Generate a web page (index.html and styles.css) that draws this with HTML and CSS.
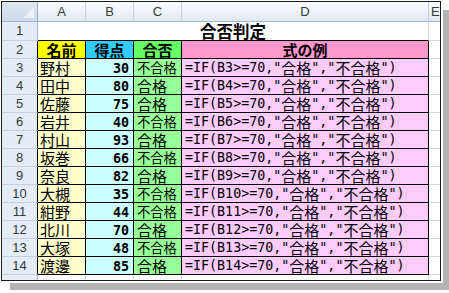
FILE: index.html
```html
<!DOCTYPE html>
<html lang="ja">
<head>
<meta charset="utf-8">
<link rel="stylesheet" href="styles.css">
</head>
<body>
<div class="win">
  <div class="sheet">
    <div class="corner"><span class="tri"></span></div>
    <div class="ch">A</div><div class="ch">B</div><div class="ch">C</div><div class="ch">D</div><div class="ch che">E</div>

    <div class="rh">1</div>
    <div class="title">合否判定</div>
    <div class="g"></div>

    <div class="rh rhb">2</div>
    <div class="c hd ya">名前</div>
    <div class="c hd cb">得点</div>
    <div class="c hd gc">合否</div>
    <div class="c hd pd">式の例</div>
    <div class="g"></div>

    <div class="rh rhb">3</div><div class="c na">野村</div><div class="c sc">30</div><div class="c rs ng">不合格</div><div class="c fm"><span class="m">=IF(B3&gt;=70,"</span>合格<span class="m">","</span>不合格<span class="m">")</span></div><div class="g"></div>
    <div class="rh rhb">4</div><div class="c na">田中</div><div class="c sc">80</div><div class="c rs">合格</div><div class="c fm"><span class="m">=IF(B4&gt;=70,"</span>合格<span class="m">","</span>不合格<span class="m">")</span></div><div class="g"></div>
    <div class="rh rhb">5</div><div class="c na">佐藤</div><div class="c sc">75</div><div class="c rs">合格</div><div class="c fm"><span class="m">=IF(B5&gt;=70,"</span>合格<span class="m">","</span>不合格<span class="m">")</span></div><div class="g"></div>
    <div class="rh rhb">6</div><div class="c na">岩井</div><div class="c sc">40</div><div class="c rs ng">不合格</div><div class="c fm"><span class="m">=IF(B6&gt;=70,"</span>合格<span class="m">","</span>不合格<span class="m">")</span></div><div class="g"></div>
    <div class="rh rhb">7</div><div class="c na">村山</div><div class="c sc">93</div><div class="c rs">合格</div><div class="c fm"><span class="m">=IF(B7&gt;=70,"</span>合格<span class="m">","</span>不合格<span class="m">")</span></div><div class="g"></div>
    <div class="rh rhb">8</div><div class="c na">坂巻</div><div class="c sc">66</div><div class="c rs ng">不合格</div><div class="c fm"><span class="m">=IF(B8&gt;=70,"</span>合格<span class="m">","</span>不合格<span class="m">")</span></div><div class="g"></div>
    <div class="rh rhb">9</div><div class="c na">奈良</div><div class="c sc">82</div><div class="c rs">合格</div><div class="c fm"><span class="m">=IF(B9&gt;=70,"</span>合格<span class="m">","</span>不合格<span class="m">")</span></div><div class="g"></div>
    <div class="rh rhb">10</div><div class="c na">大槻</div><div class="c sc">35</div><div class="c rs ng">不合格</div><div class="c fm"><span class="m">=IF(B10&gt;=70,"</span>合格<span class="m">","</span>不合格<span class="m">")</span></div><div class="g"></div>
    <div class="rh rhb">11</div><div class="c na">紺野</div><div class="c sc">44</div><div class="c rs ng">不合格</div><div class="c fm"><span class="m">=IF(B11&gt;=70,"</span>合格<span class="m">","</span>不合格<span class="m">")</span></div><div class="g"></div>
    <div class="rh rhb">12</div><div class="c na">北川</div><div class="c sc">70</div><div class="c rs">合格</div><div class="c fm"><span class="m">=IF(B12&gt;=70,"</span>合格<span class="m">","</span>不合格<span class="m">")</span></div><div class="g"></div>
    <div class="rh rhb">13</div><div class="c na">大塚</div><div class="c sc">48</div><div class="c rs ng">不合格</div><div class="c fm"><span class="m">=IF(B13&gt;=70,"</span>合格<span class="m">","</span>不合格<span class="m">")</span></div><div class="g"></div>
    <div class="rh rhb">14</div><div class="c na">渡邊</div><div class="c sc">85</div><div class="c rs">合格</div><div class="c fm"><span class="m">=IF(B14&gt;=70,"</span>合格<span class="m">","</span>不合格<span class="m">")</span></div><div class="g"></div>

    <div class="rh rhl">15</div><div class="g"></div><div class="g"></div><div class="g"></div><div class="g"></div><div class="g"></div>
  </div>
</div>
</body>
</html>
```

FILE: styles.css
```css
html, body {
  margin: 0;
  padding: 0;
  background: #ffffff;
}

body {
  width: 449px;
  height: 293px;
  overflow: hidden;
}

.win {
  box-sizing: border-box;
  width: 440px;
  height: 280px;
  margin: 1px 0 0 1px;
  border: 1px solid #1c1c1c;
  background: #ffffff;
  overflow: hidden;
  box-shadow: 2px 2px 0 #ffffff, 9px 9px 0 #b4b4b4;
}

.sheet {
  display: grid;
  grid-template-columns: 36px 48px 48px 48px 247px 64px;
  grid-template-rows: 20px 19px repeat(13, 18px) 18px;
  width: 491px;
  font-family: "Noto Sans CJK JP", sans-serif;
  color: #000000;
}

.sheet > div {
  box-sizing: border-box;
  border-right: 1px solid #d0d7e5;
  border-bottom: 1px solid #d0d7e5;
  white-space: nowrap;
}

.corner {
  position: relative;
  background: linear-gradient(#dfe7f2, #cddaea);
  border-right-color: #9eb6ce !important;
  border-bottom-color: #9eb6ce !important;
}

.tri {
  position: absolute;
  right: 3px;
  bottom: 3px;
  width: 0;
  height: 0;
  border-left: 11px solid transparent;
  border-bottom: 11px solid #eef2f8;
}

.ch {
  background: linear-gradient(#fbfcfe 0%, #f0f4f9 45%, #e2e9f3 100%);
  border-right-color: #c2d0e2 !important;
  border-bottom-color: #9eb6ce !important;
  font-family: "Liberation Sans", sans-serif;
  font-size: 13px;
  color: #333d3c;
  text-align: center;
  line-height: 19px;
}

.che {
  text-align: left;
  padding-left: 2px;
}

.rh {
  background: #e4ecf7;
  border-right-color: #9eb6ce !important;
  border-bottom-color: #c3d1e3 !important;
  font-family: "Liberation Sans", sans-serif;
  font-size: 13px;
  color: #333d3c;
  text-align: center;
  line-height: 18px;
}

.rh.rhb {
  border-right-color: #000000 !important;
  line-height: 17px;
}

.rh.rhl {
  line-height: 20px;
  overflow: hidden;
}

.title {
  grid-column: 2 / 6;
  border-bottom-color: #000000 !important;
  text-align: center;
  font-weight: bold;
  font-size: 16.5px;
  line-height: 18px;
}

.c {
  display: flex;
  align-items: flex-end;
  border-right-color: #000000 !important;
  border-bottom-color: #000000 !important;
  font-size: 15px;
  line-height: 16px;
  padding: 0 2px;
}

.hd {
  justify-content: center;
  font-weight: bold;
}

.ya { background: #ffff00; }
.cb { background: #33ccff; }
.gc { background: #66ff66; }
.pd { background: #ff99cc; }

.na {
  background: #ffffcc;
}

.sc {
  background: #ccffff;
  justify-content: flex-end;
  padding-right: 4px;
  font-family: "DejaVu Sans Mono", monospace;
  font-weight: bold;
  font-size: 13.4px;
  line-height: 15px;
}

.rs {
  background: #99ff99;
  padding-left: 3px;
}

.rs.ng {
  font-size: 13.3px;
}

.fm {
  background: #ffccff;
  padding-left: 3px;
}

.m {
  font-family: "DejaVu Sans Mono", monospace;
  font-size: 13.33px;
}
```
